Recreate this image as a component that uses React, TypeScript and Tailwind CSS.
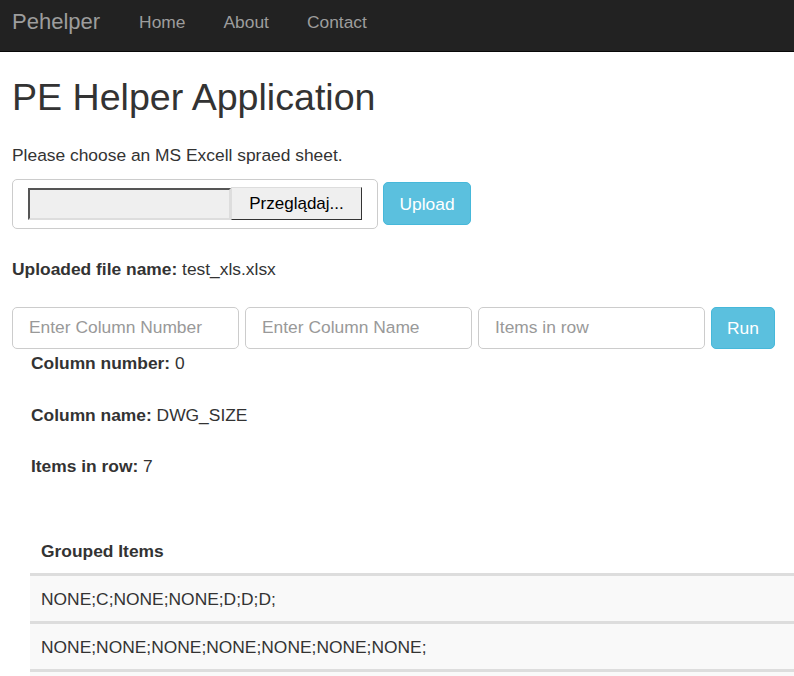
import React from "react"

const rows = [
  "NONE;C;NONE;NONE;D;D;D;",
  "NONE;NONE;NONE;NONE;NONE;NONE;NONE;",
]

function NavBar() {
  return (
    <nav className="h-[52px] bg-[#222222] border-b border-[#080808] flex items-center">
      <span className="ml-[12px] text-[22px] text-[#9d9d9d] leading-none -mt-[7px]">Pehelper</span>
      <div className="flex ml-[39px] text-[17.4px] text-[#9d9d9d] -mt-[7px]">
        <span>Home</span>
        <span className="ml-[38px]">About</span>
        <span className="ml-[38px]">Contact</span>
      </div>
    </nav>
  )
}

export default function App() {
  return (
    <div className="min-h-[676px] bg-white text-[#333333] font-['Liberation_Sans',Arial,sans-serif] text-[17.4px] overflow-hidden">
      <NavBar />
      <main className="px-[12px]">
        <h1 className="text-[37.6px] leading-none mt-[27px] font-normal">PE Helper Application</h1>
        <p className="mt-[27px] leading-[22px]">Please choose an MS Excell spraed sheet.</p>

        <div className="flex items-center mt-[13px]">
          <div className="w-[366px] h-[50px] border border-[#cccccc] rounded-[5px] flex items-center pl-[15px]">
            <div className="w-[203px] h-[32px] bg-[#efefef] border-2 border-t-[#555] border-l-[#555] border-r-[#ddd] border-b-[#ddd]" />
            <div className="w-[131px] h-[33px] bg-[#efefef] border border-[#333] border-t-[#ddd] border-l-[#ddd] flex items-center justify-center text-[17px] text-black">
              Przeglądaj...
            </div>
          </div>
          <button className="ml-[5px] w-[88px] h-[43px] bg-[#5bc0de] border border-[#46b8da] rounded-[5px] text-white text-[17.4px]">
            Upload
          </button>
        </div>

        <p className="mt-[29px] leading-[22px]">
          <b>Uploaded file name:</b> test_xls.xlsx
        </p>

        <div className="flex mt-[27px] gap-[6px]">
          {["Enter Column Number", "Enter Column Name", "Items in row"].map((p) => (
            <input
              key={p}
              placeholder={p}
              className="w-[227px] h-[42px] border border-[#cccccc] rounded-[5px] px-[16px] text-[17.4px] placeholder:text-[#999999] outline-none"
            />
          ))}
          <button className="w-[64px] h-[42px] bg-[#5bc0de] border border-[#46b8da] rounded-[5px] text-white text-[17.4px]">
            Run
          </button>
        </div>

        <div className="pl-[19px] leading-[22px]">
          <p className="mt-[3px]"><b>Column number:</b> 0</p>
          <p className="mt-[30px]"><b>Column name:</b> DWG_SIZE</p>
          <p className="mt-[29px]"><b>Items in row:</b> 7</p>
        </div>

        <table className="ml-[18px] mt-[53px] w-[780px] border-collapse">
          <thead>
            <tr>
              <th className="text-left px-[11px] h-[45px] border-b-[3px] border-[#dddddd] font-bold">Grouped Items</th>
            </tr>
          </thead>
          <tbody>
            {rows.map((r) => (
              <tr key={r} className="bg-[#f9f9f9]">
                <td className="px-[11px] h-[48px] border-b-[3px] border-[#dddddd]">{r}</td>
              </tr>
            ))}
            <tr className="bg-[#f9f9f9]">
              <td className="h-[20px]" />
            </tr>
          </tbody>
        </table>
      </main>
    </div>
  )
}
